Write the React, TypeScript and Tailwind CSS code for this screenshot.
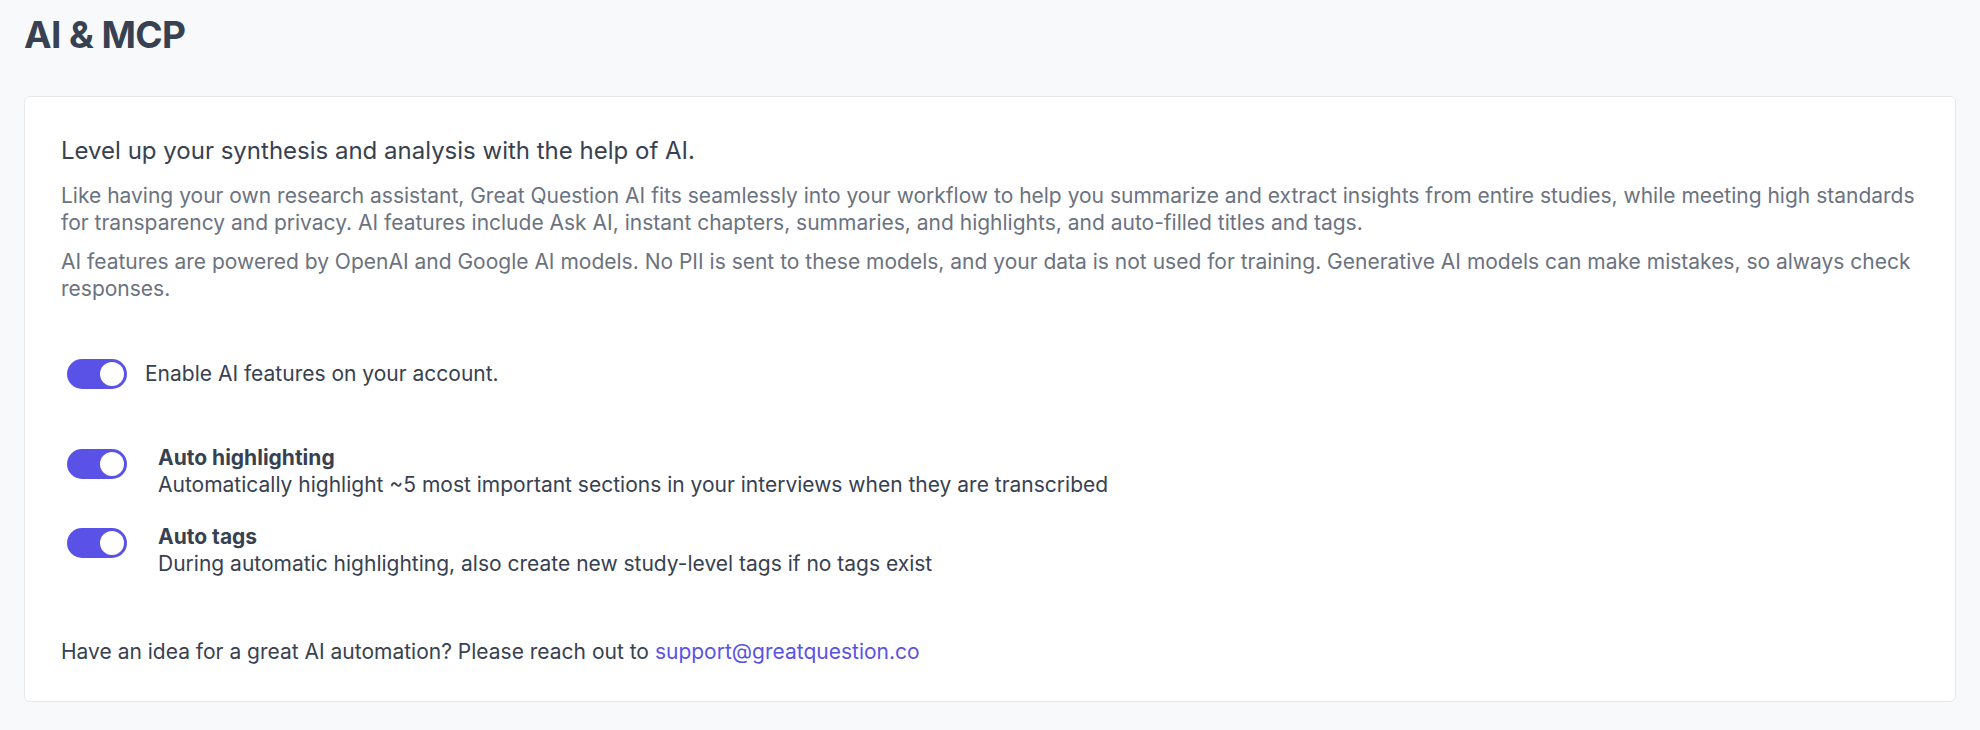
import React from "react";

function Toggle() {
  return (
    <div className="flex h-[30px] w-[60px] shrink-0 items-center rounded-full bg-[#5a52e6] p-[3px]">
      <div className="ml-auto h-[24px] w-[24px] rounded-full bg-white" />
    </div>
  );
}

export default function App() {
  return (
    <div
      className="min-h-[730px] w-full bg-[#f8f9fb] px-[24px] pt-[12px] pb-[26px] text-[#374151]"
      style={{ fontFamily: "Inter, 'Noto Sans', sans-serif" }}
    >
      <h1 className="text-[37px] font-bold leading-[46px] tracking-[-0.6px] text-[#374151]">AI &amp; MCP</h1>

      <div className="mt-[38px] rounded-[6px] border border-[#e5e7eb] bg-white pt-[38px] pr-[30px] pb-[36px] pl-[36px]">
        <h2 className="text-[24px] font-normal leading-[32px] text-[#374151]">
          Level up your synthesis and analysis with the help of AI.
        </h2>
        <p className="mt-[14.5px] text-[21px] leading-[27.3px] text-[#6b7280]">
          Like having your own research assistant, Great Question AI fits seamlessly into your workflow to help you
          summarize and extract insights from entire studies, while meeting high standards for transparency and
          privacy. AI features include Ask AI, instant chapters, summaries, and highlights, and auto-filled titles and
          tags.
        </p>
        <p className="mt-[12px] text-[21px] leading-[27.3px] text-[#6b7280]">
          AI features are powered by OpenAI and Google AI models. No PII is sent to these models, and your data is not
          used for training. Generative AI models can make mistakes, so always check responses.
        </p>

        <div className="mt-[56px] flex items-center gap-[18px] pl-[6px]">
          <Toggle />
          <span className="text-[21px] leading-[27.3px] text-[#374151]">Enable AI features on your account.</span>
        </div>

        <div className="mt-[55px] flex flex-col gap-[24.7px]">
          <div className="flex items-start gap-[31px] pl-[6px]">
            <div className="mt-[5.5px]">
              <Toggle />
            </div>
            <div className="text-[21px] leading-[27.3px] text-[#374151]">
              <div className="font-bold">Auto highlighting</div>
              <div>Automatically highlight ~5 most important sections in your interviews when they are transcribed</div>
            </div>
          </div>
          <div className="flex items-start gap-[31px] pl-[6px]">
            <div className="mt-[5.5px]">
              <Toggle />
            </div>
            <div className="text-[21px] leading-[27.3px] text-[#374151]">
              <div className="font-bold">Auto tags</div>
              <div>During automatic highlighting, also create new study-level tags if no tags exist</div>
            </div>
          </div>
        </div>

        <p className="mt-[60.6px] text-[21px] leading-[27.3px] text-[#374151]">
          Have an idea for a great AI automation? Please reach out to{" "}
          <a href="#" className="text-[#5a52e6]">
            support@greatquestion.co
          </a>
        </p>
      </div>
    </div>
  );
}
